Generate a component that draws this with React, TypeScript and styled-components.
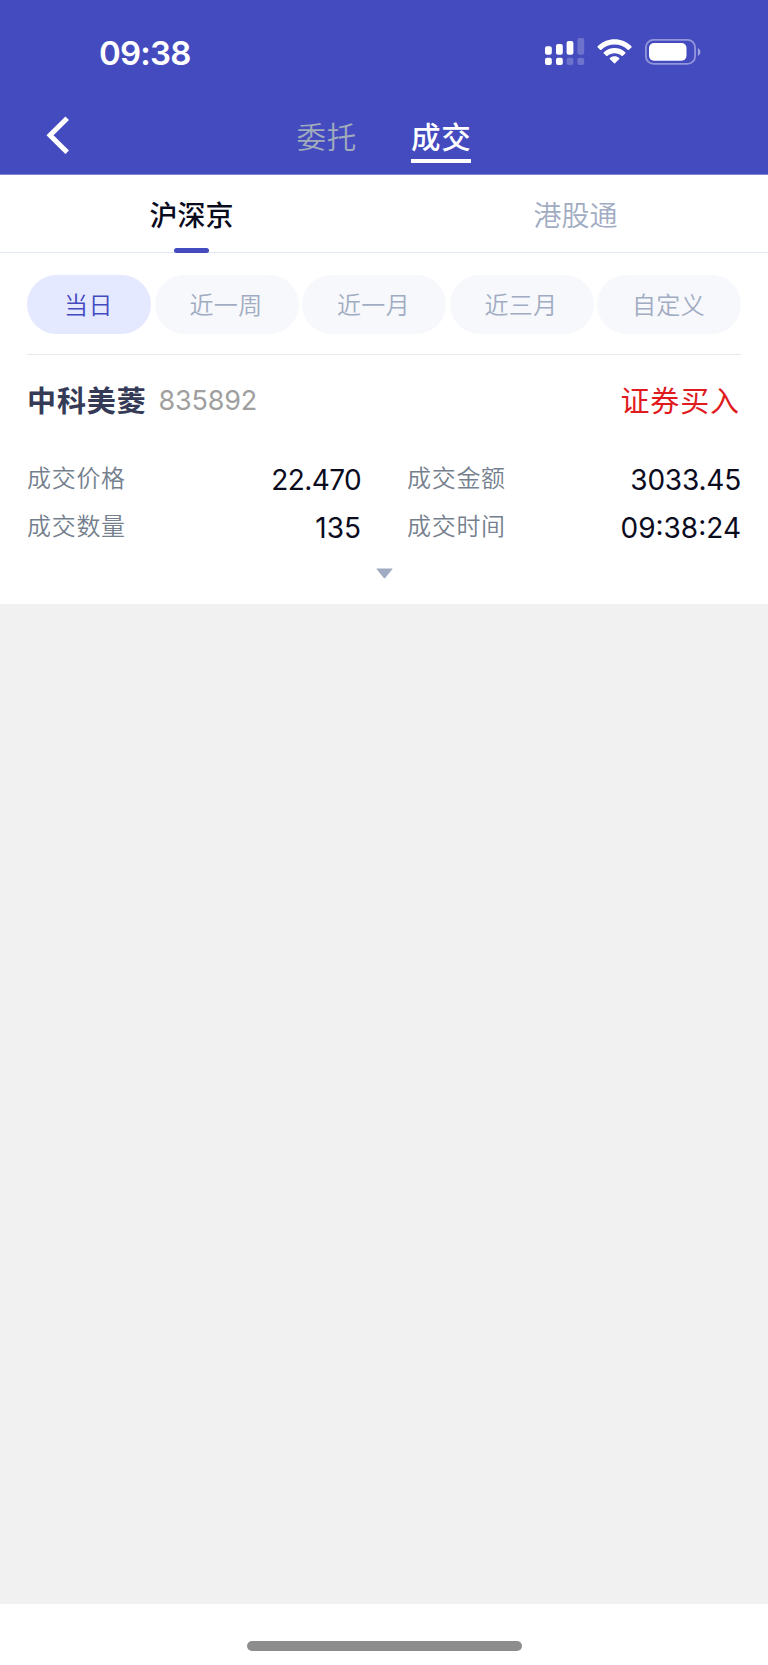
import React from "react";
import styled, { createGlobalStyle, css } from "styled-components";

const GlobalStyle = createGlobalStyle`
  *, *::before, *::after { box-sizing: border-box; }
  body {
    margin: 0;
    background: #f1f1f1;
    font-family: Inter, "Noto Sans CJK SC", sans-serif;
  }
  button {
    margin: 0;
    padding: 0;
    border: 0;
    background: none;
    font: inherit;
    color: inherit;
  }
`;

const Screen = styled.div`
  display: flex;
  flex-direction: column;
  width: 768px;
  height: 1665px;
  background: #f1f1f1;
`;

const Header = styled.header`
  height: 175px;
  flex: none;
  background: #444bbf;
  border-bottom: 1px solid #8186d5;
  color: #fff;
`;

const StatusBar = styled.div`
  display: flex;
  align-items: center;
  justify-content: space-between;
  height: 102px;
  padding: 0 67px 0 99px;
`;

const Clock = styled.time`
  font-size: 33px;
  line-height: 38px;
  padding-top: 3px;
  font-weight: 570;
  letter-spacing: -0.8px;
`;

const StatusIcons = styled.div`
  display: flex;
  align-items: center;
`;

const NavBar = styled.nav`
  display: grid;
  grid-template-columns: 160px 1fr 160px;
  height: 72px;
  padding-top: 3px;
`;

const BackButton = styled.button`
  display: flex;
  align-items: flex-start;
  padding: 11px 0 0 46px;
`;

const NavTabs = styled.div`
  display: flex;
  justify-content: center;
  gap: 54px;
`;

const NavTab = styled.button<{ $active?: boolean }>`
  height: 58px;
  padding: 11px 0 0;
  display: flex;
  flex-direction: column;
  align-items: center;
  font-size: 29.5px;
  line-height: 42px;
  letter-spacing: 0.7px;
  font-weight: ${(p) => (p.$active ? 500 : 350)};
  color: ${(p) => (p.$active ? "#fff" : "#a0abbb")};
  border-bottom: 4px solid ${(p) => (p.$active ? "#fff" : "transparent")};
`;

const MarketTabs = styled.div`
  display: grid;
  grid-template-columns: 1fr 1fr;
  flex: none;
  height: 78px;
  background: #fff;
  border-bottom: 1px solid #e2e9f3;
`;

const MarketTab = styled.button<{ $active?: boolean }>`
  display: flex;
  flex-direction: column;
  align-items: center;
  justify-content: space-between;
  height: 78px;
  padding: 21px 1px 0 0;
  font-size: 28px;
  line-height: 40px;
  font-weight: ${(p) => (p.$active ? 500 : 350)};
  color: ${(p) => (p.$active ? "#0b0b1e" : "#a1acc2")};
  ${(p) =>
    p.$active &&
    css`
      &::after {
        content: "";
        width: 35px;
        height: 5px;
        border-radius: 2.5px;
        background: #444bbf;
      }
    `}
`;

const Content = styled.main`
  flex: none;
  height: 351px;
  padding: 22px 27px 0;
  background: #fff;
`;

const Filters = styled.div`
  display: grid;
  grid-template-columns: 124px repeat(4, 1fr);
  column-gap: 3.5px;
  height: 80px;
  border-bottom: 1px solid #e9e9e9;
`;

const Pill = styled.button<{ $active?: boolean }>`
  height: 59px;
  padding: 0 1px 2px 0;
  border-radius: 29.5px;
  font-size: 24px;
  letter-spacing: 0.4px;
  font-weight: 350;
  background: ${(p) => (p.$active ? "#e5e9ff" : "#f7f8fc")};
  color: ${(p) => (p.$active ? "#444bbf" : "#a1acc2")};
`;

const RecordHeader = styled.div`
  display: flex;
  align-items: center;
  height: 92px;
  line-height: 42px;
`;

const StockName = styled.h1`
  margin: 0;
  padding-top: 2px;
  font-size: 29px;
  line-height: 42px;
  letter-spacing: 0.9px;
  font-weight: 600;
  color: #353b57;
`;

const StockCode = styled.span`
  margin-left: 12px;
  font-size: 27px;
  font-weight: 400;
  letter-spacing: -0.2px;
  color: #9f9f9f;
`;

const Side = styled.span`
  margin-left: auto;
  padding: 2px 1px 0 0;
  font-size: 29px;
  letter-spacing: 0.9px;
  font-weight: 400;
  color: #e01b1e;
`;

const Fields = styled.dl`
  display: grid;
  grid-template-columns: 334px 334px;
  column-gap: 46px;
  grid-auto-rows: 48px;
  margin: 8px 0 0;
`;

const Field = styled.div`
  display: flex;
  justify-content: space-between;
`;

const Label = styled.dt`
  font-size: 24px;
  line-height: 48px;
  letter-spacing: 0.7px;
  font-weight: 350;
  color: #757f8e;
`;

const Value = styled.dd<{ $tracking: number }>`
  margin: 0;
  padding-top: 1px;
  font-size: 28px;
  line-height: 48px;
  letter-spacing: ${(p) => p.$tracking}px;
  color: #0b0b1e;
`;

const ExpandButton = styled.button`
  display: flex;
  margin: 17px auto 0;
`;

const Blank = styled.section`
  flex: 1;
`;

const HomeBar = styled.footer`
  display: flex;
  justify-content: center;
  flex: none;
  height: 61px;
  padding-top: 37px;
  background: #fff;
`;

const HomeIndicator = styled.div`
  width: 275px;
  height: 10px;
  border-radius: 5px;
  background: #8d8d8d;
`;

const filters = ["当日", "近一周", "近一月", "近三月", "自定义"];

const fields = [
  { label: "成交价格", value: "22.470", tracking: -0.6 },
  { label: "成交金额", value: "3033.45", tracking: -0.2 },
  { label: "成交数量", value: "135", tracking: 0 },
  { label: "成交时间", value: "09:38:24", tracking: 0 },
];

const StatusGlyphs = () => (
  <svg width="158" height="30" viewBox="543 36 158 30" fill="#fff">
    <rect x="545" y="46.3" width="6.8" height="8.4" rx="2" />
    <rect x="556" y="44" width="6.8" height="10.7" rx="2" />
    <rect x="566.6" y="41" width="6.8" height="13.7" rx="2" />
    <rect x="577.4" y="38" width="6.8" height="16.7" rx="2" opacity=".22" />
    <rect x="545" y="57.8" width="6.8" height="7.2" rx="2" />
    <rect x="556" y="57.8" width="6.8" height="7.2" rx="2" />
    <rect x="566.6" y="57.8" width="6.8" height="7.2" rx="2" opacity=".22" />
    <rect x="577.4" y="57.8" width="6.8" height="7.2" rx="2" opacity=".22" />
    <path d="M597.5 46.4C607 36.7 622 36.7 631.6 46.4Q632 46.8 631.6 47.2L628.8 49.9Q628.4 50.2 628 49.9C620.2 42.6 608.9 42.6 601.1 49.9Q600.7 50.2 600.3 49.9L597.5 47.2Q597.1 46.8 597.5 46.4Z" />
    <path d="M603.6 52.4C609.7 46.5 619.4 46.5 625.5 52.4Q625.9 52.8 625.5 53.2L622.6 55.9Q622.2 56.2 621.8 55.9C617.7 52.3 611.4 52.3 607.3 55.9Q606.9 56.2 606.5 55.9L603.6 53.2Q603.2 52.8 603.6 52.4Z" />
    <path d="M609.8 58.2C612.5 55.6 616.6 55.6 619.3 58.2Q619.7 58.6 619.3 59L615 63.3Q614.55 63.7 614.1 63.3L609.8 59Q609.4 58.6 609.8 58.2Z" />
    <rect x="645.9" y="39.9" width="49.2" height="23.9" rx="7.6" fill="none" stroke="#fff" strokeWidth="1.8" opacity=".42" />
    <rect x="649" y="43" width="37.5" height="17.8" rx="5" />
    <path d="M697.8 47.9C701.3 49.3 701.3 54.5 697.8 55.9Z" opacity=".48" />
  </svg>
);

export default function App() {
  return (
    <>
      <GlobalStyle />
      <Screen>
        <Header>
          <StatusBar>
            <Clock>09:38</Clock>
            <StatusIcons>
              <StatusGlyphs />
            </StatusIcons>
          </StatusBar>
          <NavBar>
            <BackButton aria-label="返回">
              <svg width="24" height="38" viewBox="0 0 24 38" fill="none">
                <path d="M21.2 2.3L4 19.3L21.2 36.3" stroke="#fff" strokeWidth="5" />
              </svg>
            </BackButton>
            <NavTabs>
              <NavTab>委托</NavTab>
              <NavTab $active>成交</NavTab>
            </NavTabs>
          </NavBar>
        </Header>
        <MarketTabs>
          <MarketTab $active>沪深京</MarketTab>
          <MarketTab>港股通</MarketTab>
        </MarketTabs>
        <Content>
          <Filters>
            {filters.map((name, i) => (
              <Pill key={name} $active={i === 0}>
                {name}
              </Pill>
            ))}
          </Filters>
          <RecordHeader>
            <StockName>中科美菱</StockName>
            <StockCode>835892</StockCode>
            <Side>证券买入</Side>
          </RecordHeader>
          <Fields>
            {fields.map(({ label, value, tracking }) => (
              <Field key={label}>
                <Label>{label}</Label>
                <Value $tracking={tracking}>{value}</Value>
              </Field>
            ))}
          </Fields>
          <ExpandButton aria-label="展开">
            <svg width="17" height="11" viewBox="0 0 17 11">
              <path d="M1 .5H16Q17 .5 16.3 1.3L9.2 10Q8.5 10.8 7.8 10L.7 1.3Q0 .5 1 .5Z" fill="#a1acc2" />
            </svg>
          </ExpandButton>
        </Content>
        <Blank />
        <HomeBar>
          <HomeIndicator />
        </HomeBar>
      </Screen>
    </>
  );
}
